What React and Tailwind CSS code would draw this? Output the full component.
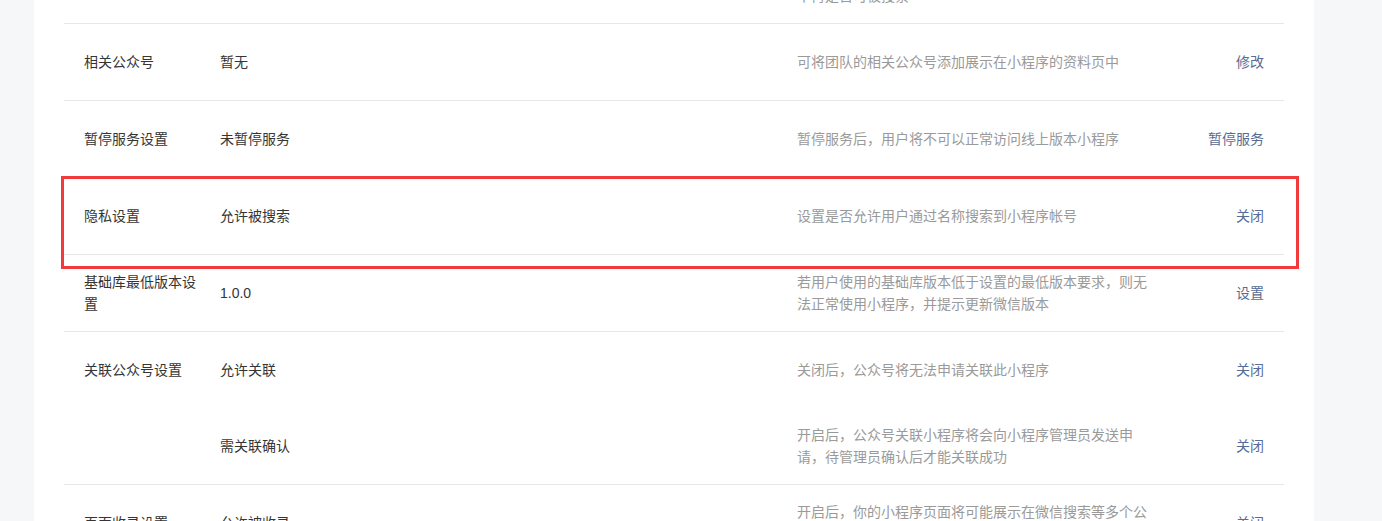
import React from "react";

const FONT = {
  fontFamily: '"Liberation Sans", "Noto Sans CJK SC", sans-serif',
};

// rows of the settings table; each entry in `items` is one sub-row
const ROWS = [
  {
    label: "搜索设置",
    items: [
      {
        value: "允许被搜索",
        desc: ["开启后，用户可以通过微信搜索找到小程序，", "不再是否可被搜索"],
        action: "设置",
      },
    ],
  },
  {
    label: "相关公众号",
    items: [
      {
        value: "暂无",
        desc: ["可将团队的相关公众号添加展示在小程序的资料页中"],
        action: "修改",
      },
    ],
  },
  {
    label: "暂停服务设置",
    items: [
      {
        value: "未暂停服务",
        desc: ["暂停服务后，用户将不可以正常访问线上版本小程序"],
        action: "暂停服务",
      },
    ],
  },
  {
    label: "隐私设置",
    highlight: true,
    items: [
      {
        value: "允许被搜索",
        desc: ["设置是否允许用户通过名称搜索到小程序帐号"],
        action: "关闭",
      },
    ],
  },
  {
    label: "基础库最低版本设置",
    items: [
      {
        value: "1.0.0",
        desc: ["若用户使用的基础库版本低于设置的最低版本要求，则无法正常使用小程序，并提示更新微信版本"],
        action: "设置",
      },
    ],
  },
  {
    label: "关联公众号设置",
    items: [
      {
        value: "允许关联",
        desc: ["关闭后，公众号将无法申请关联此小程序"],
        action: "关闭",
      },
      {
        value: "需关联确认",
        desc: ["开启后，公众号关联小程序将会向小程序管理员发送申请，待管理员确认后才能关联成功"],
        action: "关闭",
      },
    ],
  },
  {
    label: "页面收录设置",
    items: [
      {
        value: "允许被收录",
        desc: ["开启后，你的小程序页面将可能展示在微信搜索等多个公众号场景中"],
        action: "关闭",
      },
    ],
  },
];

function SubRow({ label, item }) {
  return (
    <div className="flex h-[76px] items-center px-5 text-[14px] leading-[22px]">
      <div className="w-[136px] shrink-0 pr-4 text-[#353535]">{label}</div>
      <div className="flex-1 text-[#353535]">{item.value}</div>
      <div className="w-[360px] shrink-0 text-[#9a9a9a]">
        {item.desc.map((line, i) => (
          <div key={i}>{line}</div>
        ))}
      </div>
      <div className="w-[107px] shrink-0 text-right">
        <a className="cursor-pointer text-[#576b95]">{item.action}</a>
      </div>
    </div>
  );
}

export default function App() {
  return (
    <div className="h-[521px] overflow-hidden bg-[#f6f7f9]" style={FONT}>
      <div className="ml-[34px] h-full w-[1280px] overflow-hidden bg-white px-[30px]">
        <div className="-mt-[53px]">
          {ROWS.map((row) => (
            <div key={row.label} className="relative border-b border-[#e7e7eb]">
              {row.items.map((item, i) => (
                <SubRow key={i} label={i === 0 ? row.label : ""} item={item} />
              ))}
              {row.highlight && (
                <div className="pointer-events-none absolute -left-[3px] -top-[2px] h-[93px] w-[1238px] border-[3px] border-[#f23a3c]" />
              )}
            </div>
          ))}
        </div>
      </div>
    </div>
  );
}
